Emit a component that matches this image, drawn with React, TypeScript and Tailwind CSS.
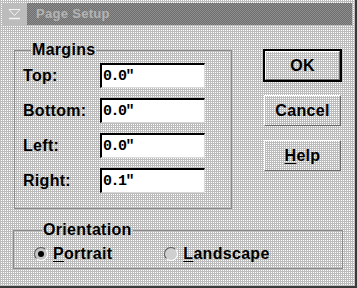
import React from "react"

const dither = "bg-[repeating-conic-gradient(#ffffff_0_25%,#bcbcbc_0_100%)] bg-[length:2px_2px]"

function Field({ label, value }: { label: string; value: string }) {
  return (
    <div className="flex items-center h-[25px]">
      <span className="w-[77px] text-[16px] font-bold tracking-[0.3px]">{label}</span>
      <div className="w-[105px] h-[25px] bg-white border-t-2 border-l-2 border-black border-r border-b border-r-[#d8d8d8] border-b-[#d8d8d8] flex items-center pl-[1px]">
        <span className="font-['Liberation_Mono',monospace] font-bold text-[15px] tracking-[-1.5px] leading-none">{value}</span>
      </div>
    </div>
  )
}

function Button({ children, isDefault }: { children: React.ReactNode; isDefault?: boolean }) {
  return (
    <div className={`w-[79px] h-[33px] ${isDefault ? "border-2 border-black" : "p-[1px]"}`}>
      <div className={`h-full w-full flex items-center justify-center text-[16px] font-bold tracking-[0.3px] border border-t-white border-l-white border-r-[#6a6a6a] border-b-[#6a6a6a] ${dither}`}>
        {children}
      </div>
    </div>
  )
}

function Radio({ checked, children }: { checked?: boolean; children: React.ReactNode }) {
  return (
    <div className="flex items-center gap-[5px]">
      <div className={`w-[14px] h-[14px] rounded-full border border-t-[#5a5a5a] border-l-[#5a5a5a] border-r-white border-b-white flex items-center justify-center ${checked ? "bg-[#c4c4c4]" : "bg-[#cfcfcf]"}`}>
        {checked && <div className="w-[6px] h-[6px] rounded-full bg-black" />}
      </div>
      <span className="text-[16px] font-bold tracking-[0.3px]">{children}</span>
    </div>
  )
}

export default function App() {
  return (
    <div className={`w-[357px] h-[288px] overflow-hidden flex flex-col font-['Liberation_Sans',Arial,sans-serif] text-black border-r-2 border-b-2 border-[#3a3a3a] ${dither}`}>
      <div className="mt-[3px] ml-[3px] mr-[3px] h-[22px] flex shrink-0">
        <div className="w-[23px] h-full bg-[#bcbcbc] flex items-center justify-center">
          <svg width="13" height="12" viewBox="0 0 13 12">
            <path d="M1 1.5 H12 L6.5 7.5 Z" fill="none" stroke="#f4f4f4" strokeWidth="1" />
            <path d="M1 10.5 H12" stroke="#f4f4f4" strokeWidth="1.5" />
          </svg>
        </div>
        <div className="flex-1 ml-[1px] bg-[repeating-conic-gradient(#6e6e6e_0_25%,#8e8e8e_0_50%)] bg-[length:2px_2px] flex items-center pl-[9px]">
          <span className="text-[13px] font-bold text-[#b4b4b4] tracking-[0.3px]">Page Setup</span>
        </div>
      </div>

      <div className="flex pl-[14px] mt-[15px]">
        <fieldset className="w-[218px] border border-[#8a8a8a] pl-[8px] pb-[15px]">
          <legend className="ml-[8px] px-[1px] text-[16px] font-bold leading-[20px] tracking-[0.3px]">Margins</legend>
          <div className="flex flex-col gap-[10px] pt-[3px]">
            <Field label="Top:" value='0.0"' />
            <Field label="Bottom:" value='0.0"' />
            <Field label="Left:" value='0.0"' />
            <Field label="Right:" value='0.1"' />
          </div>
        </fieldset>
        <div className="ml-[31px] pt-[9px] flex flex-col gap-[12px]">
          <Button isDefault>OK</Button>
          <Button>Cancel</Button>
          <Button>
            <span><span className="underline underline-offset-2">H</span>elp</span>
          </Button>
        </div>
      </div>

      <fieldset className="ml-[13px] mt-[11px] w-[330px] h-[49px] border border-[#8a8a8a] pl-[20px]">
        <legend className="ml-[8px] px-[1px] text-[16px] font-bold leading-[20px] tracking-[0.3px]">Orientation</legend>
        <div className="flex items-center gap-[52px] pt-[2px]">
          <Radio checked>
            <span className="underline underline-offset-2">P</span>ortrait
          </Radio>
          <Radio>
            <span className="underline underline-offset-2">L</span>andscape
          </Radio>
        </div>
      </fieldset>
    </div>
  )
}
